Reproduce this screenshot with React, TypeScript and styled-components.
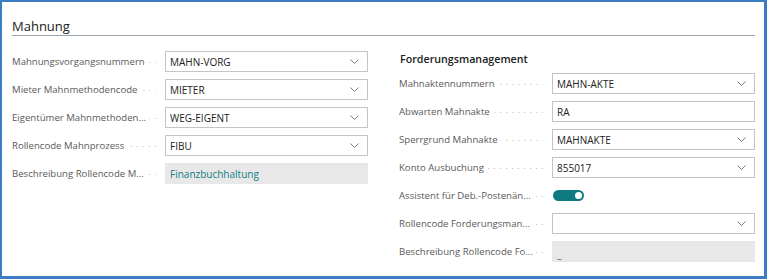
import React from "react";
import styled, { createGlobalStyle } from "styled-components";

const GlobalStyle = createGlobalStyle`
  html, body { margin: 0; padding: 0; background: #ffffff; }
  body { font-family: "Segoe UI", "Open Sans", "Noto Sans", sans-serif; }
  * { box-sizing: border-box; }
`;

const Frame = styled.div`
  width: 767px;
  height: 279px;
  border-style: solid;
  border-color: #3b7cc2;
  border-width: 2px 3px 3px 2px;
  background: #ffffff;
  padding: 0 9px 0 10px;
  overflow: hidden;
`;

const Header = styled.div`
  padding-top: 15px;
  height: 34px;
  border-bottom: 1px solid #97a1aa;
  font-size: 13px;
  line-height: 18px;
  color: #212121;
`;

const Columns = styled.div`
  margin-top: 9px;
  display: grid;
  grid-template-columns: 356px 356px;
  column-gap: 31px;
`;

const Column = styled.div<{ $offset: number }>`
  display: flex;
  flex-direction: column;
  row-gap: 7px;
  padding-top: ${(p) => p.$offset}px;
`;

const GroupTitle = styled.div`
  height: 21px;
  display: flex;
  align-items: flex-end;
  font-size: 10.7px;
  font-weight: 600;
  line-height: 14px;
  color: #212121;
  padding-left: 1px;
`;

const Row = styled.div`
  display: grid;
  grid-template-columns: 146px 1fr;
  column-gap: 7px;
  height: 21px;
  align-items: center;
`;

const Label = styled.div`
  display: flex;
  align-items: center;
  min-width: 0;
  padding-right: 2px;
  font-size: 9.6px;
  color: #5a5a5a;
`;

const LabelText = styled.span`
  white-space: nowrap;
  overflow: hidden;
  text-overflow: ellipsis;
  min-width: 0;
`;

const Leader = styled.span`
  flex: 1 0 6px;
  height: 1px;
  margin-left: 3px;
  margin-top: 2px;
  background-image: linear-gradient(to left, #bdbdbd 1px, transparent 1px);
  background-size: 6px 1px;
  background-repeat: repeat-x;
  background-position: right center;
`;

const Field = styled.div<{ $readonly?: boolean }>`
  height: 21px;
  display: flex;
  align-items: center;
  justify-content: space-between;
  border: ${(p) => (p.$readonly ? "none" : "1px solid #c4c4c4")};
  background: ${(p) => (p.$readonly ? "#e8e8e8" : "#ffffff")};
  padding: ${(p) => (p.$readonly ? "0 0 0 5px" : "0 8px 0 4px")};
  font-size: 10px;
  color: ${(p) => (p.$readonly ? "#0f8184" : "#212121")};
  white-space: nowrap;
`;

const Chevron = styled.svg`
  flex: none;
  width: 9px;
  height: 5px;
`;

const Toggle = styled.span`
  position: relative;
  display: inline-block;
  width: 31px;
  height: 11px;
  margin-left: 1px;
  border-radius: 6px;
  background: #0f7b80;
`;

const Knob = styled.span`
  position: absolute;
  right: 2px;
  top: 2px;
  width: 7px;
  height: 7px;
  border-radius: 50%;
  background: #ffffff;
`;

const ToggleCell = styled.div`
  display: flex;
  align-items: center;
`;

const Underscore = styled.span`
  padding-top: 4px;
`;

type Item =
  | { label: string; kind: "select"; value: string }
  | { label: string; kind: "text"; value: string }
  | { label: string; kind: "readonly"; value: string }
  | { label: string; kind: "toggle" };

const left: Item[] = [
  { label: "Mahnungsvorgangsnummern", kind: "select", value: "MAHN-VORG" },
  { label: "Mieter Mahnmethodencode", kind: "select", value: "MIETER" },
  { label: "Eigentümer Mahnmethoden...", kind: "select", value: "WEG-EIGENT" },
  { label: "Rollencode Mahnprozess", kind: "select", value: "FIBU" },
  { label: "Beschreibung Rollencode M...", kind: "readonly", value: "Finanzbuchhaltung" },
];

const right: Item[] = [
  { label: "Mahnaktennummern", kind: "select", value: "MAHN-AKTE" },
  { label: "Abwarten Mahnakte", kind: "text", value: "RA" },
  { label: "Sperrgrund Mahnakte", kind: "select", value: "MAHNAKTE" },
  { label: "Konto Ausbuchung", kind: "select", value: "855017" },
  { label: "Assistent für Deb.-Postenän...", kind: "toggle" },
  { label: "Rollencode Forderungsman...", kind: "select", value: "" },
  { label: "Beschreibung Rollencode Fo...", kind: "readonly", value: "_" },
];

const ChevronIcon = () => (
  <Chevron viewBox="0 0 9 5">
    <polyline points="0.5,0.5 4.5,4.5 8.5,0.5" fill="none" stroke="#6b6b6b" strokeWidth="0.9" />
  </Chevron>
);

const FieldRow = ({ item }: { item: Item }) => {
  let control: React.ReactNode;
  if (item.kind === "toggle") {
    control = (
      <ToggleCell>
        <Toggle>
          <Knob />
        </Toggle>
      </ToggleCell>
    );
  } else if (item.kind === "readonly") {
    control = (
      <Field $readonly>
        {item.value === "_" ? <Underscore>_</Underscore> : <span>{item.value}</span>}
      </Field>
    );
  } else if (item.kind === "text") {
    control = (
      <Field>
        <span>{item.value}</span>
      </Field>
    );
  } else {
    control = (
      <Field>
        <span>{item.value}</span>
        <ChevronIcon />
      </Field>
    );
  }
  return (
    <Row>
      <Label>
        <LabelText>{item.label}</LabelText>
        <Leader />
      </Label>
      {control}
    </Row>
  );
};

export default function App() {
  return (
    <>
      <GlobalStyle />
      <Frame>
        <Header>Mahnung</Header>
        <Columns>
          <Column $offset={6}>
            {left.map((it) => (
              <FieldRow key={it.label} item={it} />
            ))}
          </Column>
          <Column $offset={0}>
            <GroupTitle>Forderungsmanagement</GroupTitle>
            {right.map((it) => (
              <FieldRow key={it.label} item={it} />
            ))}
          </Column>
        </Columns>
      </Frame>
    </>
  );
}
